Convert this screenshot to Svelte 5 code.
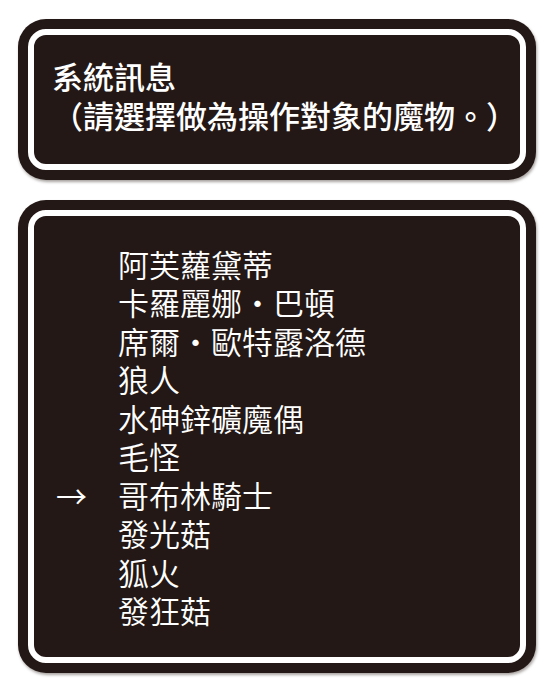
<script>
	let selected = $state(6);

	const monsters = [
		'阿芙蘿黛蒂',
		'卡羅麗娜・巴頓',
		'席爾・歐特露洛德',
		'狼人',
		'水砷鋅礦魔偶',
		'毛怪',
		'哥布林騎士',
		'發光菇',
		'狐火',
		'發狂菇'
	];
</script>

<main>
	<section class="panel">
		<div class="frame message">
			<h1>系統訊息</h1>
			<p>（請選擇做為操作對象的魔物。）</p>
		</div>
	</section>

	<section class="panel">
		<ul class="frame menu">
			{#each monsters as monster, i}
				<li>
					<button aria-pressed={selected === i} onclick={() => (selected = i)}>
						<span class="cursor" aria-hidden="true">{selected === i ? '→' : ''}</span>
						<span>{monster}</span>
					</button>
				</li>
			{/each}
		</ul>
	</section>
</main>

<style>
	:global(body) {
		margin: 0;
		background: #fff;
	}

	main {
		display: flex;
		flex-direction: column;
		gap: 20px;
		padding: 19px 15px 16px 18px;
		font-family: 'Noto Sans CJK TC', sans-serif;
		font-size: 31px;
		line-height: 38px;
		color: #fff;
	}

	.panel {
		padding: 10px;
		border-radius: 28px;
		background: #231815;
		box-shadow: 1px 2px 3px rgba(35, 24, 21, 0.4);
	}

	.frame {
		margin: 0;
		border: 6px solid #fff;
		border-radius: 18px;
	}

	.message {
		padding: 21px 0 30px 18px;
		line-height: 39px;
	}

	h1,
	p {
		margin: 0;
		font-size: 31px;
		font-weight: 500;
		white-space: nowrap;
	}

	p {
		/* keep the full-width opening bracket in its own cell */
		text-spacing-trim: space-all;
	}

	.menu {
		display: flex;
		flex-direction: column;
		justify-content: space-between;
		min-height: 384px;
		padding: 29px 16px 28px 22px;
		list-style: none;
	}

	button {
		display: flex;
		width: 100%;
		padding: 0;
		border: 0;
		background: none;
		color: inherit;
		font: inherit;
		font-weight: 350;
		text-align: left;
		white-space: nowrap;
		cursor: pointer;
	}

	.cursor {
		flex: 0 0 62px;
	}
</style>
